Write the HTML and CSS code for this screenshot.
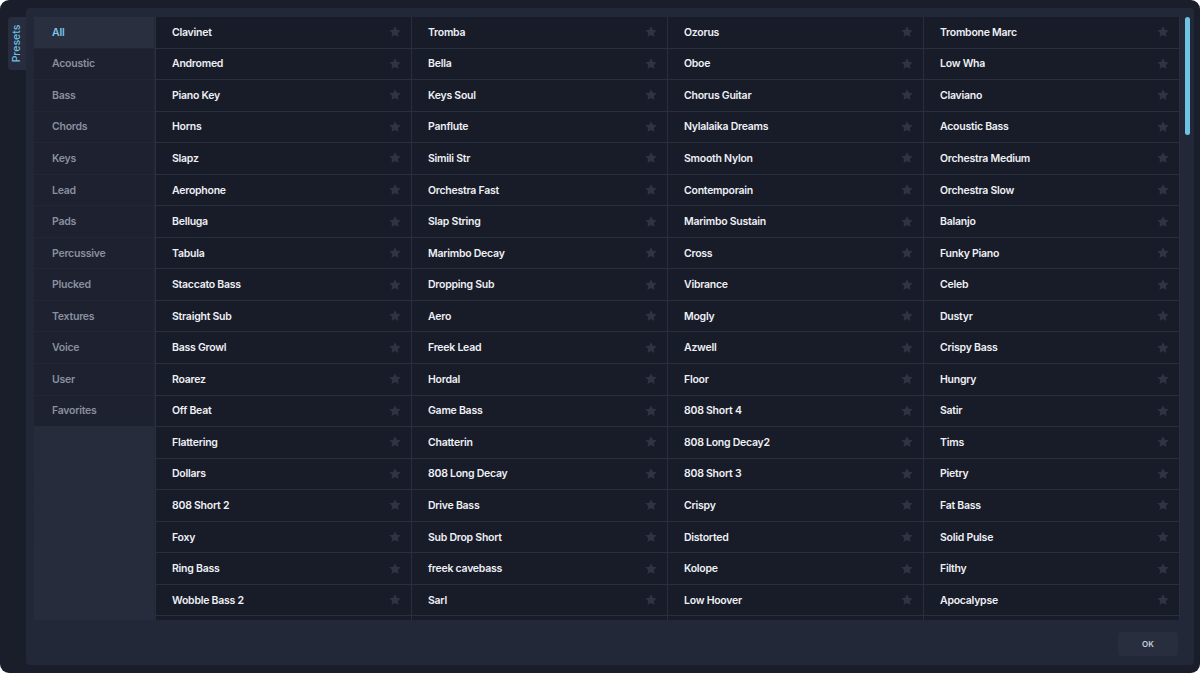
FILE: index.html
```html
<!DOCTYPE html>
<html>
<head>
<meta charset="utf-8">
<link rel="stylesheet" href="styles.css">
</head>
<body>
<div class="window">
  <div class="tabs">
    <div class="tab"><span class="tab-label">Presets</span></div>
  </div>
  <div class="panel">
    <div class="content">
      <div class="side-col">
        <ul class="sidebar">
          <li class="cat active">All</li>
          <li class="cat">Acoustic</li>
          <li class="cat">Bass</li>
          <li class="cat">Chords</li>
          <li class="cat">Keys</li>
          <li class="cat">Lead</li>
          <li class="cat">Pads</li>
          <li class="cat">Percussive</li>
          <li class="cat">Plucked</li>
          <li class="cat">Textures</li>
          <li class="cat">Voice</li>
          <li class="cat">User</li>
          <li class="cat">Favorites</li>
        </ul>
      </div>
      <div class="grid-wrap">
        <div class="grid" id="grid"></div>
      </div>
      <div class="scroll"><div class="thumb"></div></div>
    </div>
    <div class="footer">
      <button class="ok">OK</button>
    </div>
  </div>
</div>
<script src="app.js"></script>
</body>
</html>
```

FILE: app.js
```js
var names = [
"Clavinet","Tromba","Ozorus","Trombone Marc",
"Andromed","Bella","Oboe","Low Wha",
"Piano Key","Keys Soul","Chorus Guitar","Claviano",
"Horns","Panflute","Nylalaika Dreams","Acoustic Bass",
"Slapz","Simili Str","Smooth Nylon","Orchestra Medium",
"Aerophone","Orchestra Fast","Contemporain","Orchestra Slow",
"Belluga","Slap String","Marimbo Sustain","Balanjo",
"Tabula","Marimbo Decay","Cross","Funky Piano",
"Staccato Bass","Dropping Sub","Vibrance","Celeb",
"Straight Sub","Aero","Mogly","Dustyr",
"Bass Growl","Freek Lead","Azwell","Crispy Bass",
"Roarez","Hordal","Floor","Hungry",
"Off Beat","Game Bass","808 Short 4","Satir",
"Flattering","Chatterin","808 Long Decay2","Tims",
"Dollars","808 Long Decay","808 Short 3","Pietry",
"808 Short 2","Drive Bass","Crispy","Fat Bass",
"Foxy","Sub Drop Short","Distorted","Solid Pulse",
"Ring Bass","freek cavebass","Kolope","Filthy",
"Wobble Bass 2","Sarl","Low Hoover","Apocalypse",
"","","",""
];
var star = '<svg class="star" viewBox="0 0 24 24" width="14" height="14"><path d="M12 2l3 6.3 6.8.8-5 4.7 1.3 6.8L12 17.2l-6.1 3.4 1.3-6.8-5-4.7 6.8-.8z"/></svg>';
var html = '';
for (var i = 0; i < names.length; i++) {
  html += '<div class="cell"><span class="name">' + names[i] + '</span>' + (names[i] ? star : '') + '</div>';
}
document.getElementById('grid').innerHTML = html;
```

FILE: styles.css
```css
* { box-sizing: border-box; }
html, body { margin: 0; padding: 0; background: #ffffff; }
body { width: 1200px; height: 673px; overflow: hidden; font-family: Inter, "Noto Sans", sans-serif; }

.window {
  width: 1200px;
  height: 673px;
  background: #1a1e2b;
  border-radius: 9px;
  display: flex;
  padding: 8px 6px 8px 0;
  overflow: hidden;
}

.tabs {
  width: 26px;
  flex: none;
  padding-top: 9px;
  padding-left: 8px;
}
.tab {
  width: 18px;
  height: 53px;
  background: #272d3e;
  border-radius: 4px 0 0 4px;
  display: flex;
  align-items: center;
  justify-content: center;
}
.tab-label {
  display: block;
  transform: rotate(-90deg);
  color: #6cbfe0;
  font-size: 10.5px;
  font-weight: 500;
  white-space: nowrap;
}

.panel {
  flex: 1;
  background: #232838;
  border-radius: 4px;
  display: flex;
  flex-direction: column;
  padding: 9px 2px 0 8px;
}

.content {
  height: 603px;
  display: flex;
}

.side-col {
  width: 120px;
  flex: none;
  background: linear-gradient(#262b3b, #272c3d);
  margin-right: 1px;
}
.sidebar {
  list-style: none;
  margin: 0;
  padding: 0;
  display: flex;
  flex-direction: column;
  gap: 1px;
  background: #222736;
}
.cat {
  height: 30.55px;
  background: #1d2130;
  color: #8a909f;
  font-size: 10.5px;
  font-weight: 600;
  letter-spacing: -0.25px;
  display: flex;
  align-items: center;
  padding-left: 18px;
}
.cat.active {
  background: #2a2f3f;
  color: #7cc6e6;
}

.grid-wrap {
  width: 1025px;
  flex: none;
  overflow: hidden;
  background: #2a2f3e;
  padding-left: 1px;
}
.grid {
  display: grid;
  grid-template-columns: repeat(4, 255px);
  grid-auto-rows: 30.55px;
  gap: 1px;
}
.cell {
  background: #181b28;
  display: flex;
  align-items: center;
  justify-content: space-between;
  padding: 0 9px 0 16px;
}
.name {
  color: #eef0f4;
  font-size: 10.5px;
  font-weight: 600;
  letter-spacing: -0.25px;
  white-space: nowrap;
}
.star { fill: #2f3444; flex: none; }

.scroll {
  width: 10px;
  flex: none;
  padding-left: 5px;
}
.thumb {
  width: 5px;
  height: 118px;
  background: #6fc2e3;
  border-radius: 3px;
}

.footer {
  flex: 1;
  display: flex;
  justify-content: flex-end;
  align-items: flex-start;
  padding: 12px 14px 0 0;
}
.ok {
  width: 60px;
  height: 24px;
  background: #282e3e;
  border: none;
  border-radius: 3px;
  color: #c9cfdc;
  font-family: Inter, "Noto Sans", sans-serif;
  font-size: 8px;
  font-weight: 600;
  padding: 0;
}
```
